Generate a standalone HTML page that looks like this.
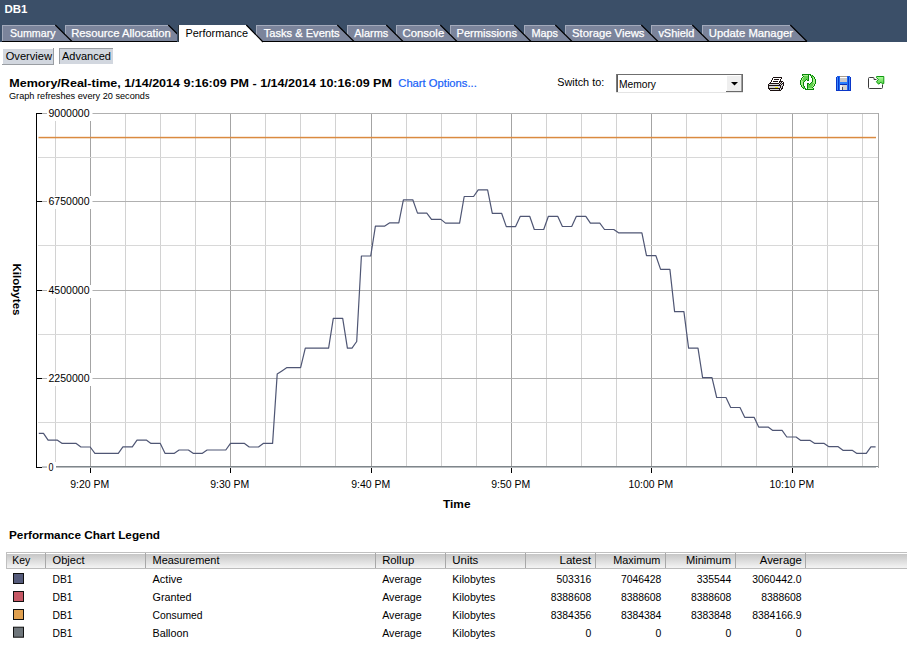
<!DOCTYPE html>
<html><head><meta charset="utf-8"><style>
html,body{margin:0;padding:0;background:#fff;width:907px;height:662px;overflow:hidden}
svg{display:block}
text{font-family:"Liberation Sans", sans-serif;}
</style></head><body>
<svg width="907" height="662" viewBox="0 0 907 662">
<rect width="907" height="662" fill="#fff"/>
<rect x="0" y="0" width="907" height="42" fill="#3b4f68"/>
<text x="4.4" y="13" font-size="11" font-weight="bold" fill="#fff" textLength="23" lengthAdjust="spacingAndGlyphs" >DB1</text>
<path d="M702,25 H790 L806,41 H702 Z" fill="#7b849b"/>
<rect x="702" y="25" width="88" height="1" fill="#a3aabb"/>
<rect x="702" y="25" width="1" height="16" fill="#a3aabb"/>
<path d="M790.3,25 L807,41.5" stroke="#000" stroke-width="1.1"/>
<rect x="702" y="41" width="105" height="1" fill="#000"/>
<text x="708.8" y="37" font-size="11" fill="#ffffff" textLength="84.2" lengthAdjust="spacingAndGlyphs" stroke="#ffffff" stroke-width="0.25">Update Manager</text>
<path d="M651,25 H692 L708,41 H651 Z" fill="#7b849b"/>
<rect x="651" y="25" width="41" height="1" fill="#a3aabb"/>
<rect x="651" y="25" width="1" height="16" fill="#a3aabb"/>
<path d="M692.3,25 L709,41.5" stroke="#000" stroke-width="1.1"/>
<rect x="651" y="41" width="58" height="1" fill="#000"/>
<text x="658.4" y="37" font-size="11" fill="#ffffff" textLength="35.9" lengthAdjust="spacingAndGlyphs" stroke="#ffffff" stroke-width="0.25">vShield</text>
<path d="M565,25 H641 L657,41 H565 Z" fill="#7b849b"/>
<rect x="565" y="25" width="76" height="1" fill="#a3aabb"/>
<rect x="565" y="25" width="1" height="16" fill="#a3aabb"/>
<path d="M641.3,25 L658,41.5" stroke="#000" stroke-width="1.1"/>
<rect x="565" y="41" width="93" height="1" fill="#000"/>
<text x="572" y="37" font-size="11" fill="#ffffff" textLength="72.5" lengthAdjust="spacingAndGlyphs" stroke="#ffffff" stroke-width="0.25">Storage Views</text>
<path d="M524,25 H555 L571,41 H524 Z" fill="#7b849b"/>
<rect x="524" y="25" width="31" height="1" fill="#a3aabb"/>
<rect x="524" y="25" width="1" height="16" fill="#a3aabb"/>
<path d="M555.3,25 L572,41.5" stroke="#000" stroke-width="1.1"/>
<rect x="524" y="41" width="48" height="1" fill="#000"/>
<text x="531.4" y="37" font-size="11" fill="#ffffff" textLength="26.6" lengthAdjust="spacingAndGlyphs" stroke="#ffffff" stroke-width="0.25">Maps</text>
<path d="M450,25 H514 L530,41 H450 Z" fill="#7b849b"/>
<rect x="450" y="25" width="64" height="1" fill="#a3aabb"/>
<rect x="450" y="25" width="1" height="16" fill="#a3aabb"/>
<path d="M514.3,25 L531,41.5" stroke="#000" stroke-width="1.1"/>
<rect x="450" y="41" width="81" height="1" fill="#000"/>
<text x="456.5" y="37" font-size="11" fill="#ffffff" textLength="60.5" lengthAdjust="spacingAndGlyphs" stroke="#ffffff" stroke-width="0.25">Permissions</text>
<path d="M396,25 H440 L456,41 H396 Z" fill="#7b849b"/>
<rect x="396" y="25" width="44" height="1" fill="#a3aabb"/>
<rect x="396" y="25" width="1" height="16" fill="#a3aabb"/>
<path d="M440.3,25 L457,41.5" stroke="#000" stroke-width="1.1"/>
<rect x="396" y="41" width="61" height="1" fill="#000"/>
<text x="402.5" y="37" font-size="11" fill="#ffffff" textLength="41.7" lengthAdjust="spacingAndGlyphs" stroke="#ffffff" stroke-width="0.25">Console</text>
<path d="M347,25 H386 L402,41 H347 Z" fill="#7b849b"/>
<rect x="347" y="25" width="39" height="1" fill="#a3aabb"/>
<rect x="347" y="25" width="1" height="16" fill="#a3aabb"/>
<path d="M386.3,25 L403,41.5" stroke="#000" stroke-width="1.1"/>
<rect x="347" y="41" width="56" height="1" fill="#000"/>
<text x="354.3" y="37" font-size="11" fill="#ffffff" textLength="33.9" lengthAdjust="spacingAndGlyphs" stroke="#ffffff" stroke-width="0.25">Alarms</text>
<path d="M256,25 H337 L353,41 H256 Z" fill="#7b849b"/>
<rect x="256" y="25" width="81" height="1" fill="#a3aabb"/>
<rect x="256" y="25" width="1" height="16" fill="#a3aabb"/>
<path d="M337.3,25 L354,41.5" stroke="#000" stroke-width="1.1"/>
<rect x="256" y="41" width="98" height="1" fill="#000"/>
<text x="263.7" y="37" font-size="11" fill="#ffffff" textLength="76.0" lengthAdjust="spacingAndGlyphs" stroke="#ffffff" stroke-width="0.25">Tasks &amp; Events</text>
<path d="M65,25 H168 L184,41 H65 Z" fill="#7b849b"/>
<rect x="65" y="25" width="103" height="1" fill="#a3aabb"/>
<rect x="65" y="25" width="1" height="16" fill="#a3aabb"/>
<path d="M168.3,25 L185,41.5" stroke="#000" stroke-width="1.1"/>
<rect x="65" y="41" width="120" height="1" fill="#000"/>
<text x="71.2" y="37" font-size="11" fill="#ffffff" textLength="99.6" lengthAdjust="spacingAndGlyphs" stroke="#ffffff" stroke-width="0.25">Resource Allocation</text>
<path d="M2,25 H55 L71,41 H2 Z" fill="#7b849b"/>
<rect x="2" y="25" width="53" height="1" fill="#a3aabb"/>
<rect x="2" y="25" width="1" height="16" fill="#a3aabb"/>
<path d="M55.3,25 L72,41.5" stroke="#000" stroke-width="1.1"/>
<rect x="2" y="41" width="70" height="1" fill="#000"/>
<text x="10" y="37" font-size="11" fill="#ffffff" textLength="45.5" lengthAdjust="spacingAndGlyphs" stroke="#ffffff" stroke-width="0.25">Summary</text>
<rect x="177" y="25" width="1" height="17" fill="#3b4f68"/>
<path d="M179,25 H246 L262.5,42 H179 Z" fill="#fff"/>
<rect x="178" y="25" width="1" height="17" fill="#30383f"/>
<path d="M246.3,25 L263,42" stroke="#000" stroke-width="1.1"/>
<text x="185.5" y="37" font-size="11" textLength="62.5" lengthAdjust="spacingAndGlyphs" >Performance</text>
<rect x="3" y="49" width="50" height="15" fill="#d2d7df"/>
<rect x="53" y="48" width="1" height="17" fill="#9a9ea3"/><rect x="2" y="64" width="52" height="1" fill="#9a9ea3"/>
<text x="5.7" y="60" font-size="11" textLength="46.3" lengthAdjust="spacingAndGlyphs" >Overview</text>
<rect x="60" y="49" width="53" height="15" fill="#d2d7df"/>
<rect x="59" y="48" width="54" height="1" fill="#9a9ea3"/><rect x="59" y="48" width="1" height="16" fill="#9a9ea3"/>
<text x="62" y="59.5" font-size="11" textLength="49" lengthAdjust="spacingAndGlyphs" >Advanced</text>
<text x="9.3" y="87" font-size="11" font-weight="bold" textLength="382.6" lengthAdjust="spacingAndGlyphs" >Memory/Real-time, 1/14/2014 9:16:09 PM - 1/14/2014 10:16:09 PM</text>
<text x="398.3" y="87" font-size="11" fill="#1660f8" textLength="78.5" lengthAdjust="spacingAndGlyphs" stroke="#1660f8" stroke-width="0.2">Chart Options...</text>
<text x="9" y="99" font-size="9" textLength="140.5" lengthAdjust="spacingAndGlyphs" >Graph refreshes every 20 seconds</text>
<text x="557.2" y="86.4" font-size="11" textLength="47" lengthAdjust="spacingAndGlyphs" >Switch to:</text>
<rect x="616" y="74" width="127" height="19" fill="#fff"/>
<rect x="616" y="74" width="127" height="1" fill="#6f6f6f"/>
<rect x="616" y="74" width="1" height="18" fill="#7a7a7a"/><rect x="617" y="75" width="1" height="17" fill="#5c5c5c"/>
<rect x="742" y="74" width="1" height="18" fill="#6a6a6a"/><rect x="616" y="92" width="127" height="1" fill="#e4e4e4"/>
<rect x="726" y="75" width="16" height="16" fill="#efefef"/>
<rect x="726" y="75" width="15" height="1" fill="#fff"/><rect x="726" y="75" width="1" height="16" fill="#fff"/>
<rect x="741" y="75" width="1" height="16" fill="#a0a0a0"/><rect x="726" y="91" width="17" height="1" fill="#6a6a6a"/>
<path d="M731,82 h7 l-3.5,3.6 z" fill="#000"/>
<text x="619" y="88" font-size="11" textLength="37" lengthAdjust="spacingAndGlyphs" >Memory</text>
<rect x="773" y="77" width="9" height="1" fill="#1a1010"/>
<rect x="772" y="78" width="1" height="1" fill="#1a1010"/>
<rect x="773" y="78" width="8" height="1" fill="#ffffff"/>
<rect x="781" y="78" width="1" height="1" fill="#1a1010"/>
<rect x="772" y="79" width="1" height="1" fill="#1a1010"/>
<rect x="773" y="79" width="1" height="1" fill="#ffffff"/>
<rect x="774" y="79" width="5" height="1" fill="#1a1010"/>
<rect x="779" y="79" width="1" height="1" fill="#ffffff"/>
<rect x="780" y="79" width="1" height="1" fill="#1a1010"/>
<rect x="771" y="80" width="1" height="1" fill="#1a1010"/>
<rect x="772" y="80" width="8" height="1" fill="#ffffff"/>
<rect x="780" y="80" width="1" height="1" fill="#1a1010"/>
<rect x="771" y="81" width="1" height="1" fill="#1a1010"/>
<rect x="772" y="81" width="1" height="1" fill="#ffffff"/>
<rect x="773" y="81" width="5" height="1" fill="#1a1010"/>
<rect x="778" y="81" width="1" height="1" fill="#ffffff"/>
<rect x="779" y="81" width="4" height="1" fill="#1a1010"/>
<rect x="770" y="82" width="1" height="1" fill="#1a1010"/>
<rect x="771" y="82" width="8" height="1" fill="#ffffff"/>
<rect x="779" y="82" width="1" height="1" fill="#1a1010"/>
<rect x="780" y="82" width="1" height="1" fill="#d4d4d4"/>
<rect x="781" y="82" width="1" height="1" fill="#1a1010"/>
<rect x="782" y="82" width="1" height="1" fill="#ffffff"/>
<rect x="783" y="82" width="1" height="1" fill="#1a1010"/>
<rect x="769" y="83" width="10" height="1" fill="#1a1010"/>
<rect x="779" y="83" width="1" height="1" fill="#d4d4d4"/>
<rect x="780" y="83" width="1" height="1" fill="#1a1010"/>
<rect x="781" y="83" width="1" height="1" fill="#d4d4d4"/>
<rect x="782" y="83" width="2" height="1" fill="#1a1010"/>
<rect x="768" y="84" width="1" height="1" fill="#1a1010"/>
<rect x="769" y="84" width="10" height="1" fill="#d4d4d4"/>
<rect x="779" y="84" width="1" height="1" fill="#1a1010"/>
<rect x="780" y="84" width="1" height="1" fill="#d4d4d4"/>
<rect x="781" y="84" width="1" height="1" fill="#1a1010"/>
<rect x="782" y="84" width="1" height="1" fill="#d4d4d4"/>
<rect x="783" y="84" width="1" height="1" fill="#1a1010"/>
<rect x="768" y="85" width="13" height="1" fill="#1a1010"/>
<rect x="781" y="85" width="2" height="1" fill="#d4d4d4"/>
<rect x="783" y="85" width="1" height="1" fill="#1a1010"/>
<rect x="768" y="86" width="1" height="1" fill="#1a1010"/>
<rect x="769" y="86" width="6" height="1" fill="#d4d4d4"/>
<rect x="775" y="86" width="5" height="1" fill="#d0d0e8"/>
<rect x="780" y="86" width="1" height="1" fill="#1a1010"/>
<rect x="781" y="86" width="1" height="1" fill="#d4d4d4"/>
<rect x="782" y="86" width="1" height="1" fill="#1a1010"/>
<rect x="768" y="87" width="1" height="1" fill="#1a1010"/>
<rect x="769" y="87" width="6" height="1" fill="#d4d4d4"/>
<rect x="775" y="87" width="3" height="1" fill="#f2f200"/>
<rect x="778" y="87" width="2" height="1" fill="#d0d0e8"/>
<rect x="780" y="87" width="1" height="1" fill="#1a1010"/>
<rect x="781" y="87" width="1" height="1" fill="#d4d4d4"/>
<rect x="782" y="87" width="1" height="1" fill="#1a1010"/>
<rect x="768" y="88" width="12" height="1" fill="#1a1010"/>
<rect x="780" y="88" width="1" height="1" fill="#d4d4d4"/>
<rect x="781" y="88" width="2" height="1" fill="#1a1010"/>
<rect x="769" y="89" width="1" height="1" fill="#1a1010"/>
<rect x="770" y="89" width="9" height="1" fill="#d4d4d4"/>
<rect x="779" y="89" width="1" height="1" fill="#1a1010"/>
<rect x="780" y="89" width="1" height="1" fill="#d4d4d4"/>
<rect x="781" y="89" width="1" height="1" fill="#1a1010"/>
<rect x="770" y="90" width="11" height="1" fill="#1a1010"/>
<rect x="802" y="74" width="7" height="1" fill="#088608"/>
<rect x="802" y="75" width="1" height="1" fill="#088608"/>
<rect x="803" y="75" width="5" height="1" fill="#a8f28c"/>
<rect x="808" y="75" width="1" height="1" fill="#088608"/>
<rect x="803" y="76" width="1" height="1" fill="#088608"/>
<rect x="804" y="76" width="4" height="1" fill="#62d04e"/>
<rect x="808" y="76" width="1" height="1" fill="#088608"/>
<rect x="802" y="77" width="1" height="1" fill="#088608"/>
<rect x="803" y="77" width="1" height="1" fill="#a8f28c"/>
<rect x="804" y="77" width="4" height="1" fill="#62d04e"/>
<rect x="808" y="77" width="1" height="1" fill="#088608"/>
<rect x="801" y="78" width="1" height="1" fill="#088608"/>
<rect x="802" y="78" width="1" height="1" fill="#a8f28c"/>
<rect x="803" y="78" width="5" height="1" fill="#62d04e"/>
<rect x="808" y="78" width="1" height="1" fill="#088608"/>
<rect x="801" y="79" width="1" height="1" fill="#088608"/>
<rect x="802" y="79" width="1" height="1" fill="#a8f28c"/>
<rect x="803" y="79" width="3" height="1" fill="#62d04e"/>
<rect x="806" y="79" width="1" height="1" fill="#088608"/>
<rect x="807" y="79" width="1" height="1" fill="#62d04e"/>
<rect x="808" y="79" width="1" height="1" fill="#088608"/>
<rect x="800" y="80" width="1" height="1" fill="#088608"/>
<rect x="801" y="80" width="1" height="1" fill="#a8f28c"/>
<rect x="802" y="80" width="3" height="1" fill="#62d04e"/>
<rect x="805" y="80" width="1" height="1" fill="#088608"/>
<rect x="807" y="80" width="2" height="1" fill="#088608"/>
<rect x="800" y="81" width="1" height="1" fill="#088608"/>
<rect x="801" y="81" width="2" height="1" fill="#a8f28c"/>
<rect x="803" y="81" width="1" height="1" fill="#62d04e"/>
<rect x="804" y="81" width="1" height="1" fill="#088608"/>
<rect x="800" y="82" width="1" height="1" fill="#088608"/>
<rect x="801" y="82" width="2" height="1" fill="#a8f28c"/>
<rect x="803" y="82" width="1" height="1" fill="#088608"/>
<rect x="800" y="83" width="1" height="1" fill="#088608"/>
<rect x="801" y="83" width="2" height="1" fill="#a8f28c"/>
<rect x="803" y="83" width="1" height="1" fill="#088608"/>
<rect x="800" y="84" width="1" height="1" fill="#088608"/>
<rect x="801" y="84" width="2" height="1" fill="#a8f28c"/>
<rect x="803" y="84" width="1" height="1" fill="#088608"/>
<rect x="801" y="85" width="1" height="1" fill="#088608"/>
<rect x="802" y="85" width="1" height="1" fill="#a8f28c"/>
<rect x="803" y="85" width="1" height="1" fill="#088608"/>
<rect x="801" y="86" width="1" height="1" fill="#088608"/>
<rect x="802" y="86" width="1" height="1" fill="#a8f28c"/>
<rect x="803" y="86" width="1" height="1" fill="#62d04e"/>
<rect x="804" y="86" width="1" height="1" fill="#088608"/>
<rect x="802" y="87" width="1" height="1" fill="#088608"/>
<rect x="803" y="87" width="1" height="1" fill="#62d04e"/>
<rect x="804" y="87" width="1" height="1" fill="#088608"/>
<rect x="803" y="88" width="1" height="1" fill="#088608"/>
<rect x="804" y="88" width="1" height="1" fill="#62d04e"/>
<rect x="805" y="88" width="1" height="1" fill="#088608"/>
<rect x="805" y="89" width="2" height="1" fill="#088608"/>
<rect x="809" y="74" width="2" height="1" fill="#088608"/>
<rect x="810" y="75" width="1" height="1" fill="#088608"/>
<rect x="811" y="75" width="1" height="1" fill="#62d04e"/>
<rect x="812" y="75" width="1" height="1" fill="#088608"/>
<rect x="811" y="76" width="1" height="1" fill="#088608"/>
<rect x="812" y="76" width="1" height="1" fill="#62d04e"/>
<rect x="813" y="76" width="1" height="1" fill="#088608"/>
<rect x="811" y="77" width="1" height="1" fill="#088608"/>
<rect x="812" y="77" width="1" height="1" fill="#62d04e"/>
<rect x="813" y="77" width="1" height="1" fill="#a8f28c"/>
<rect x="814" y="77" width="1" height="1" fill="#088608"/>
<rect x="812" y="78" width="1" height="1" fill="#088608"/>
<rect x="813" y="78" width="1" height="1" fill="#a8f28c"/>
<rect x="814" y="78" width="1" height="1" fill="#088608"/>
<rect x="812" y="79" width="1" height="1" fill="#088608"/>
<rect x="813" y="79" width="2" height="1" fill="#a8f28c"/>
<rect x="815" y="79" width="1" height="1" fill="#088608"/>
<rect x="812" y="80" width="1" height="1" fill="#088608"/>
<rect x="813" y="80" width="2" height="1" fill="#a8f28c"/>
<rect x="815" y="80" width="1" height="1" fill="#088608"/>
<rect x="812" y="81" width="1" height="1" fill="#088608"/>
<rect x="813" y="81" width="2" height="1" fill="#a8f28c"/>
<rect x="815" y="81" width="1" height="1" fill="#088608"/>
<rect x="811" y="82" width="1" height="1" fill="#088608"/>
<rect x="812" y="82" width="1" height="1" fill="#62d04e"/>
<rect x="813" y="82" width="2" height="1" fill="#a8f28c"/>
<rect x="815" y="82" width="1" height="1" fill="#088608"/>
<rect x="807" y="83" width="2" height="1" fill="#088608"/>
<rect x="810" y="83" width="1" height="1" fill="#088608"/>
<rect x="811" y="83" width="3" height="1" fill="#62d04e"/>
<rect x="814" y="83" width="1" height="1" fill="#a8f28c"/>
<rect x="815" y="83" width="1" height="1" fill="#088608"/>
<rect x="807" y="84" width="1" height="1" fill="#088608"/>
<rect x="808" y="84" width="1" height="1" fill="#62d04e"/>
<rect x="809" y="84" width="1" height="1" fill="#088608"/>
<rect x="810" y="84" width="3" height="1" fill="#62d04e"/>
<rect x="813" y="84" width="1" height="1" fill="#a8f28c"/>
<rect x="814" y="84" width="1" height="1" fill="#088608"/>
<rect x="807" y="85" width="1" height="1" fill="#088608"/>
<rect x="808" y="85" width="5" height="1" fill="#62d04e"/>
<rect x="813" y="85" width="1" height="1" fill="#a8f28c"/>
<rect x="814" y="85" width="1" height="1" fill="#088608"/>
<rect x="807" y="86" width="1" height="1" fill="#088608"/>
<rect x="808" y="86" width="4" height="1" fill="#62d04e"/>
<rect x="812" y="86" width="1" height="1" fill="#a8f28c"/>
<rect x="813" y="86" width="1" height="1" fill="#088608"/>
<rect x="807" y="87" width="1" height="1" fill="#088608"/>
<rect x="808" y="87" width="4" height="1" fill="#62d04e"/>
<rect x="812" y="87" width="1" height="1" fill="#088608"/>
<rect x="807" y="88" width="1" height="1" fill="#088608"/>
<rect x="808" y="88" width="5" height="1" fill="#a8f28c"/>
<rect x="813" y="88" width="1" height="1" fill="#088608"/>
<rect x="807" y="89" width="7" height="1" fill="#088608"/>
<rect x="836" y="77" width="15" height="14" fill="#0a36c8"/>
<rect x="837" y="76" width="3" height="1" fill="#1a5ae8"/><rect x="847" y="76" width="3" height="1" fill="#1a5ae8"/>
<rect x="837" y="77" width="1" height="13" fill="#3a8cff"/><rect x="849" y="77" width="1" height="13" fill="#3a8cff"/>
<rect x="839" y="77" width="1" height="13" fill="#1e6cf5"/><rect x="847" y="77" width="1" height="13" fill="#1e6cf5"/>
<rect x="840" y="76" width="7" height="1" fill="#a89c8c"/>
<rect x="840" y="77" width="7" height="1" fill="#ffffff"/>
<rect x="840" y="78" width="7" height="4" fill="#c9c9c9"/>
<rect x="840" y="82" width="7" height="2" fill="#2a80ff"/>
<rect x="840" y="84" width="7" height="1" fill="#0a30b0"/>
<rect x="840" y="85" width="7" height="5" fill="#d2d2d2"/>
<rect x="840" y="85" width="2" height="5" fill="#f2f2f2"/>
<rect x="842" y="87" width="1" height="3" fill="#505050"/>
<path d="M868.5,78.5 q0,-1 1,-1 h4 q0.5,0 0.5,0.5 v1.5 h2.5 M882.5,84.5 v3 q0,1 -1,1 h-12 q-1,0 -1,-1 v-9" fill="none" stroke="#3a3a3a" stroke-width="1"/>
<defs><linearGradient id="eg" x1="0" y1="0" x2="0" y2="1"><stop offset="0" stop-color="#b0ffa0"/><stop offset="1" stop-color="#50cc40"/></linearGradient></defs>
<path d="M876.6,76.5 L883.8,76.5 L883.8,83.5 L882.6,84 L881,82.2 L878.6,84.2 L876.4,81.8 L878.4,79.4 L876.4,77.6 Z" fill="url(#eg)" stroke="#0f990f" stroke-width="1" stroke-linejoin="round"/>
<rect x="55" y="114" width="1" height="352" fill="#d2d2d2"/>
<rect x="90" y="114" width="1" height="352" fill="#a4a4a4"/>
<rect x="125" y="114" width="1" height="352" fill="#d2d2d2"/>
<rect x="160" y="114" width="1" height="352" fill="#d2d2d2"/>
<rect x="195" y="114" width="1" height="352" fill="#d2d2d2"/>
<rect x="230" y="114" width="1" height="352" fill="#a4a4a4"/>
<rect x="265" y="114" width="1" height="352" fill="#d2d2d2"/>
<rect x="300" y="114" width="1" height="352" fill="#d2d2d2"/>
<rect x="335" y="114" width="1" height="352" fill="#d2d2d2"/>
<rect x="371" y="114" width="1" height="352" fill="#a4a4a4"/>
<rect x="406" y="114" width="1" height="352" fill="#d2d2d2"/>
<rect x="441" y="114" width="1" height="352" fill="#d2d2d2"/>
<rect x="476" y="114" width="1" height="352" fill="#d2d2d2"/>
<rect x="511" y="114" width="1" height="352" fill="#a4a4a4"/>
<rect x="546" y="114" width="1" height="352" fill="#d2d2d2"/>
<rect x="581" y="114" width="1" height="352" fill="#d2d2d2"/>
<rect x="616" y="114" width="1" height="352" fill="#d2d2d2"/>
<rect x="651" y="114" width="1" height="352" fill="#a4a4a4"/>
<rect x="686" y="114" width="1" height="352" fill="#d2d2d2"/>
<rect x="721" y="114" width="1" height="352" fill="#d2d2d2"/>
<rect x="756" y="114" width="1" height="352" fill="#d2d2d2"/>
<rect x="792" y="114" width="1" height="352" fill="#a4a4a4"/>
<rect x="827" y="114" width="1" height="352" fill="#d2d2d2"/>
<rect x="862" y="114" width="1" height="352" fill="#d2d2d2"/>
<rect x="37" y="113" width="842" height="1" fill="#b0b0b0"/>
<rect x="38" y="157" width="840" height="1" fill="#d8d8d8"/>
<rect x="38" y="201" width="840" height="1" fill="#b0b0b0"/>
<rect x="38" y="245" width="840" height="1" fill="#d8d8d8"/>
<rect x="38" y="290" width="840" height="1" fill="#b0b0b0"/>
<rect x="38" y="334" width="840" height="1" fill="#d8d8d8"/>
<rect x="38" y="378" width="840" height="1" fill="#b0b0b0"/>
<rect x="38" y="422" width="840" height="1" fill="#d8d8d8"/>
<rect x="42" y="466" width="836" height="1" fill="#7f868b"/>
<rect x="42" y="466" width="5" height="1" fill="#c4c8cb"/>
<rect x="42" y="467" width="834" height="1" fill="#b9bdc0"/>
<rect x="878" y="113" width="1" height="355" fill="#a8a8a8"/>
<rect x="47" y="108" width="45.5" height="13" fill="#fff"/>
<text x="48.5" y="116.8" font-size="11" textLength="41" lengthAdjust="spacingAndGlyphs" >9000000</text>
<rect x="47" y="196" width="45.5" height="13" fill="#fff"/>
<text x="48.5" y="204.8" font-size="11" textLength="41" lengthAdjust="spacingAndGlyphs" >6750000</text>
<rect x="47" y="285" width="45.5" height="13" fill="#fff"/>
<text x="48.5" y="293.8" font-size="11" textLength="41" lengthAdjust="spacingAndGlyphs" >4500000</text>
<rect x="47" y="373" width="45.5" height="13" fill="#fff"/>
<text x="48.5" y="381.8" font-size="11" textLength="41" lengthAdjust="spacingAndGlyphs" >2250000</text>
<rect x="47" y="462" width="9" height="13" fill="#fff"/>
<text x="48.5" y="470.8" font-size="11" textLength="5" lengthAdjust="spacingAndGlyphs" >0</text>
<rect x="36" y="113" width="1" height="355" fill="#000"/>
<rect x="37" y="113" width="5" height="1" fill="#000"/>
<rect x="37" y="201" width="5" height="1" fill="#000"/>
<rect x="37" y="290" width="5" height="1" fill="#000"/>
<rect x="37" y="378" width="5" height="1" fill="#000"/>
<rect x="37" y="467" width="5" height="1" fill="#000"/>
<rect x="90" y="468" width="1" height="5" fill="#000"/>
<text x="89.8" y="487.7" font-size="11" textLength="39" lengthAdjust="spacingAndGlyphs" text-anchor="middle" >9:20 PM</text>
<rect x="230" y="468" width="1" height="5" fill="#000"/>
<text x="229.8" y="487.7" font-size="11" textLength="39" lengthAdjust="spacingAndGlyphs" text-anchor="middle" >9:30 PM</text>
<rect x="371" y="468" width="1" height="5" fill="#000"/>
<text x="370.8" y="487.7" font-size="11" textLength="39" lengthAdjust="spacingAndGlyphs" text-anchor="middle" >9:40 PM</text>
<rect x="511" y="468" width="1" height="5" fill="#000"/>
<text x="510.8" y="487.7" font-size="11" textLength="39" lengthAdjust="spacingAndGlyphs" text-anchor="middle" >9:50 PM</text>
<rect x="651" y="468" width="1" height="5" fill="#000"/>
<text x="650.8" y="487.7" font-size="11" textLength="44.5" lengthAdjust="spacingAndGlyphs" text-anchor="middle" >10:00 PM</text>
<rect x="792" y="468" width="1" height="5" fill="#000"/>
<text x="791.8" y="487.7" font-size="11" textLength="44.5" lengthAdjust="spacingAndGlyphs" text-anchor="middle" >10:10 PM</text>
<text x="443" y="508" font-size="11" font-weight="bold" textLength="27.5" lengthAdjust="spacingAndGlyphs" >Time</text>
<text x="0" y="0" font-size="11" font-weight="bold" textLength="52" lengthAdjust="spacingAndGlyphs" transform="translate(13,263.5) rotate(90)">Kilobytes</text>
<rect x="38.5" y="136.8" width="837.5" height="1.5" fill="#da8a40"/>
<polyline points="38.8,433.4 43.5,433.4 48.1,440.2 52.8,440.2 57.5,440.2 62.2,443.4 66.8,443.4 71.5,443.4 76.2,443.4 80.9,447.0 85.5,447.0 90.2,447.0 94.9,453.3 99.6,453.3 104.2,453.3 108.9,453.3 113.6,453.3 118.3,453.3 122.9,446.8 127.6,446.8 132.3,446.8 137.0,440.1 141.6,440.1 146.3,440.1 151.0,443.4 155.7,443.4 160.3,443.4 165.0,453.3 169.7,453.3 174.4,453.3 179.1,450.0 183.7,450.0 188.4,450.0 193.1,453.3 197.8,453.3 202.4,453.3 207.1,450.0 211.8,450.0 216.4,450.0 221.1,450.0 225.8,450.0 230.5,443.4 235.1,443.4 239.8,443.4 244.5,443.4 249.2,447.0 253.8,447.0 258.5,447.0 263.2,443.4 267.9,443.4 272.6,443.4 277.2,374.1 281.9,370.9 286.6,367.7 291.2,367.7 295.9,367.7 300.6,367.7 305.3,348.1 309.9,348.1 314.6,348.1 319.3,348.1 324.0,348.1 328.6,348.1 333.3,318.3 338.0,318.3 342.7,318.3 347.4,348.2 352.0,348.2 356.7,341.5 361.4,256.0 366.1,256.0 370.7,256.0 375.4,226.1 380.1,226.1 384.8,226.1 389.4,222.9 394.1,222.9 398.8,222.9 403.4,199.8 408.1,199.8 412.8,199.8 417.5,213.1 422.1,213.1 426.8,213.1 431.5,219.4 436.2,219.4 440.9,219.4 445.5,223.1 450.2,223.1 454.9,223.1 459.6,223.1 464.2,196.5 468.9,196.5 473.6,196.5 478.2,189.9 482.9,189.9 487.6,189.9 492.3,213.3 496.9,213.3 501.6,213.3 506.3,226.6 511.0,226.6 515.6,226.6 520.3,216.3 525.0,216.3 529.7,216.3 534.3,229.5 539.0,229.5 543.7,229.5 548.4,216.3 553.0,216.3 557.7,216.3 562.4,226.5 567.1,226.5 571.7,226.5 576.4,216.3 581.1,216.3 585.8,216.3 590.4,223.2 595.1,223.2 599.8,223.2 604.5,229.5 609.1,229.5 613.8,229.5 618.5,232.8 623.2,232.8 627.8,232.8 632.5,232.8 637.2,232.8 641.9,232.8 646.5,255.7 651.2,255.7 655.9,255.7 660.6,269.4 665.2,269.4 669.9,269.4 674.6,311.6 679.3,311.6 683.9,311.6 688.6,348.2 693.3,348.2 698.0,348.2 702.6,377.7 707.3,377.7 712.0,377.7 716.7,397.5 721.3,397.5 726.0,397.5 730.7,407.5 735.4,407.5 740.0,407.5 744.7,417.3 749.4,417.3 754.1,417.3 758.7,427.1 763.4,427.1 768.1,427.1 772.8,430.4 777.4,430.4 782.1,430.4 786.8,437.0 791.5,437.0 796.1,437.0 800.8,440.4 805.5,440.4 810.2,440.4 814.8,443.4 819.5,443.4 824.2,443.4 828.9,446.7 833.5,446.7 838.2,446.7 842.9,450.3 847.6,450.3 852.2,450.3 856.9,453.4 861.6,453.4 866.3,453.4 870.9,446.9 875.6,446.9" fill="none" stroke="#4f5674" stroke-width="1.2" stroke-linejoin="round"/>
<text x="9" y="539" font-size="11" font-weight="bold" textLength="151" lengthAdjust="spacingAndGlyphs" >Performance Chart Legend</text>
<defs><linearGradient id="hg" x1="0" y1="0" x2="0" y2="1"><stop offset="0" stop-color="#c6c6c6"/><stop offset="1" stop-color="#f4f4f4"/></linearGradient></defs>
<rect x="6" y="554" width="901" height="14" fill="url(#hg)"/>
<rect x="6" y="553" width="901" height="1" fill="#ffffff"/>
<rect x="6" y="552" width="901" height="1" fill="#c0c0c0"/>
<rect x="6" y="568" width="901" height="1" fill="#bcbcbc"/>
<rect x="6" y="552" width="1" height="17" fill="#c0c0c0"/>
<rect x="45" y="553" width="1" height="15" fill="#a8a8a8"/>
<rect x="145" y="553" width="1" height="15" fill="#a8a8a8"/>
<rect x="375" y="553" width="1" height="15" fill="#a8a8a8"/>
<rect x="445" y="553" width="1" height="15" fill="#a8a8a8"/>
<rect x="525" y="553" width="1" height="15" fill="#a8a8a8"/>
<rect x="595" y="553" width="1" height="15" fill="#a8a8a8"/>
<rect x="665" y="553" width="1" height="15" fill="#a8a8a8"/>
<rect x="735" y="553" width="1" height="15" fill="#a8a8a8"/>
<rect x="805" y="553" width="1" height="15" fill="#a8a8a8"/>
<text x="12.3" y="564" font-size="11" textLength="18" lengthAdjust="spacingAndGlyphs" >Key</text>
<text x="52.6" y="564" font-size="11" textLength="32" lengthAdjust="spacingAndGlyphs" >Object</text>
<text x="152.5" y="564" font-size="11" textLength="67" lengthAdjust="spacingAndGlyphs" >Measurement</text>
<text x="382.2" y="564" font-size="11" textLength="32" lengthAdjust="spacingAndGlyphs" >Rollup</text>
<text x="452.3" y="564" font-size="11" textLength="26" lengthAdjust="spacingAndGlyphs" >Units</text>
<text x="559.5" y="564" font-size="11" textLength="31.5" lengthAdjust="spacingAndGlyphs" >Latest</text>
<text x="613.3" y="564" font-size="11" textLength="47" lengthAdjust="spacingAndGlyphs" >Maximum</text>
<text x="686" y="564" font-size="11" textLength="45" lengthAdjust="spacingAndGlyphs" >Minimum</text>
<text x="759.8" y="564" font-size="11" textLength="42" lengthAdjust="spacingAndGlyphs" >Average</text>
<rect x="13.5" y="573.5" width="10" height="10" fill="#555b7b" stroke="#111" stroke-width="1"/>
<text x="52.6" y="583" font-size="11" textLength="20" lengthAdjust="spacingAndGlyphs" >DB1</text>
<text x="152.5" y="583" font-size="11" textLength="30" lengthAdjust="spacingAndGlyphs" >Active</text>
<text x="382.2" y="583" font-size="11" textLength="39.5" lengthAdjust="spacingAndGlyphs" >Average</text>
<text x="452.3" y="583" font-size="11" textLength="43" lengthAdjust="spacingAndGlyphs" >Kilobytes</text>
<text x="591.2" y="583" font-size="11" textLength="34.6" lengthAdjust="spacingAndGlyphs" text-anchor="end" >503316</text>
<text x="661.3" y="583" font-size="11" textLength="40.4" lengthAdjust="spacingAndGlyphs" text-anchor="end" >7046428</text>
<text x="731.3" y="583" font-size="11" textLength="34.6" lengthAdjust="spacingAndGlyphs" text-anchor="end" >335544</text>
<text x="801.6" y="583" font-size="11" textLength="49.4" lengthAdjust="spacingAndGlyphs" text-anchor="end" >3060442.0</text>
<rect x="13.5" y="591.5" width="10" height="10" fill="#c65865" stroke="#111" stroke-width="1"/>
<text x="52.6" y="601" font-size="11" textLength="20" lengthAdjust="spacingAndGlyphs" >DB1</text>
<text x="152.5" y="601" font-size="11" textLength="39" lengthAdjust="spacingAndGlyphs" >Granted</text>
<text x="382.2" y="601" font-size="11" textLength="39.5" lengthAdjust="spacingAndGlyphs" >Average</text>
<text x="452.3" y="601" font-size="11" textLength="43" lengthAdjust="spacingAndGlyphs" >Kilobytes</text>
<text x="591.2" y="601" font-size="11" textLength="40.4" lengthAdjust="spacingAndGlyphs" text-anchor="end" >8388608</text>
<text x="661.3" y="601" font-size="11" textLength="40.4" lengthAdjust="spacingAndGlyphs" text-anchor="end" >8388608</text>
<text x="731.3" y="601" font-size="11" textLength="40.4" lengthAdjust="spacingAndGlyphs" text-anchor="end" >8388608</text>
<text x="801.6" y="601" font-size="11" textLength="40.4" lengthAdjust="spacingAndGlyphs" text-anchor="end" >8388608</text>
<rect x="13.5" y="609.5" width="10" height="10" fill="#e0a04f" stroke="#111" stroke-width="1"/>
<text x="52.6" y="619" font-size="11" textLength="20" lengthAdjust="spacingAndGlyphs" >DB1</text>
<text x="152.5" y="619" font-size="11" textLength="50" lengthAdjust="spacingAndGlyphs" >Consumed</text>
<text x="382.2" y="619" font-size="11" textLength="39.5" lengthAdjust="spacingAndGlyphs" >Average</text>
<text x="452.3" y="619" font-size="11" textLength="43" lengthAdjust="spacingAndGlyphs" >Kilobytes</text>
<text x="591.2" y="619" font-size="11" textLength="40.4" lengthAdjust="spacingAndGlyphs" text-anchor="end" >8384356</text>
<text x="661.3" y="619" font-size="11" textLength="40.4" lengthAdjust="spacingAndGlyphs" text-anchor="end" >8384384</text>
<text x="731.3" y="619" font-size="11" textLength="40.4" lengthAdjust="spacingAndGlyphs" text-anchor="end" >8383848</text>
<text x="801.6" y="619" font-size="11" textLength="49.4" lengthAdjust="spacingAndGlyphs" text-anchor="end" >8384166.9</text>
<rect x="13.5" y="627.2" width="10" height="10" fill="#6f767b" stroke="#111" stroke-width="1"/>
<text x="52.6" y="636.7" font-size="11" textLength="20" lengthAdjust="spacingAndGlyphs" >DB1</text>
<text x="152.5" y="636.7" font-size="11" textLength="36" lengthAdjust="spacingAndGlyphs" >Balloon</text>
<text x="382.2" y="636.7" font-size="11" textLength="39.5" lengthAdjust="spacingAndGlyphs" >Average</text>
<text x="452.3" y="636.7" font-size="11" textLength="43" lengthAdjust="spacingAndGlyphs" >Kilobytes</text>
<text x="591.2" y="636.7" font-size="11" textLength="5.8" lengthAdjust="spacingAndGlyphs" text-anchor="end" >0</text>
<text x="661.3" y="636.7" font-size="11" textLength="5.8" lengthAdjust="spacingAndGlyphs" text-anchor="end" >0</text>
<text x="731.3" y="636.7" font-size="11" textLength="5.8" lengthAdjust="spacingAndGlyphs" text-anchor="end" >0</text>
<text x="801.6" y="636.7" font-size="11" textLength="5.8" lengthAdjust="spacingAndGlyphs" text-anchor="end" >0</text>
</svg>
</body></html>
